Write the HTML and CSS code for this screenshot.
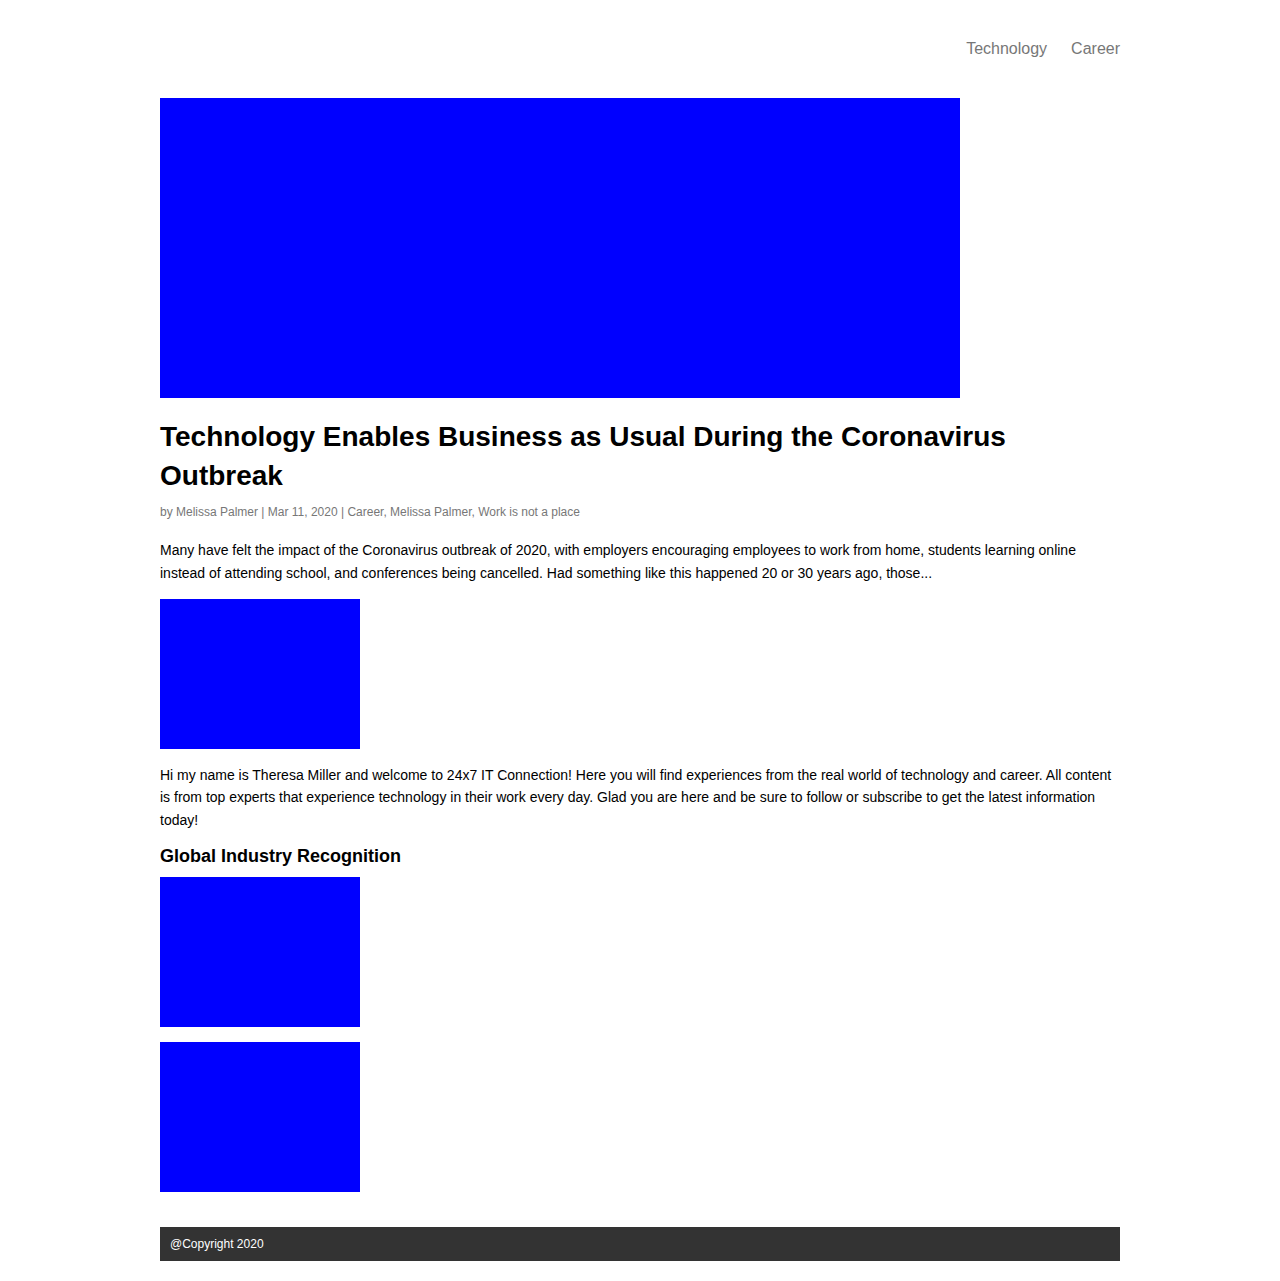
FILE: index.html
```html
<!DOCTYPE html>
<html lang="en">
<head>
<meta charset="utf-8">
<title>24x7 IT Connection</title>
<link rel="stylesheet" href="styles.css">
</head>
<body>
<div class="container">
  <header class="header">
    <nav class="nav">
      <a href="#technology">Technology</a>
      <a href="#career">Career</a>
    </nav>
  </header>
  <main>
    <article class="post">
      <div class="image image-hero"></div>
      <h1 class="title">Technology Enables Business as Usual During the Coronavirus Outbreak</h1>
      <p class="meta">by Melissa Palmer | Mar 11, 2020 | Career, Melissa Palmer, Work is not a place</p>
      <p class="text">Many have felt the impact of the Coronavirus outbreak of 2020, with employers encouraging employees to work from home, students learning online instead of attending school, and conferences being cancelled. Had something like this happened 20 or 30 years ago, those...</p>
    </article>
    <section class="about">
      <div class="image"></div>
      <p class="text">Hi my name is Theresa Miller and welcome to 24x7 IT Connection! Here you will find experiences from the real world of technology and career. All content is from top experts that experience technology in their work every day. Glad you are here and be sure to follow or subscribe to get the latest information today!</p>
    </section>
    <section class="recognition">
      <h2 class="subtitle">Global Industry Recognition</h2>
      <div class="image"></div>
      <div class="image"></div>
    </section>
  </main>
  <footer class="footer">@Copyright 2020</footer>
</div>
</body>
</html>
```

FILE: styles.css
```css
* {
  box-sizing: border-box;
}

body {
  margin: 0;
  background: #fff;
  color: #000;
  font-family: "Liberation Sans", Arial, sans-serif;
  font-size: 14px;
  line-height: 1.6;
}

.container {
  max-width: 1000px;
  margin: 0 auto;
  padding: 20px;
}

.header {
  display: flex;
  justify-content: flex-end;
  padding: 16px 0 36px;
}

.nav {
  display: flex;
  gap: 24px;
  font-size: 16px;
}

.nav a {
  color: #777;
  text-decoration: none;
}

.image {
  width: 200px;
  max-width: 100%;
  height: 150px;
  margin-bottom: 15px;
  background: #00f;
}

.image-hero {
  width: 800px;
  height: 300px;
  margin-bottom: 19px;
}

.title {
  margin: 0 0 8px;
  font-size: 28px;
  line-height: 1.4;
}

.meta {
  margin: 0 0 17px;
  color: #777;
  font-size: 12px;
}

.text {
  margin: 0 0 15px;
}

.subtitle {
  margin: 0 0 11px;
  font-size: 18px;
  line-height: 20px;
}

.footer {
  margin-top: 35px;
  padding: 8px 10px;
  background: #333;
  color: #fff;
  font-size: 12px;
  line-height: 18px;
}
```
